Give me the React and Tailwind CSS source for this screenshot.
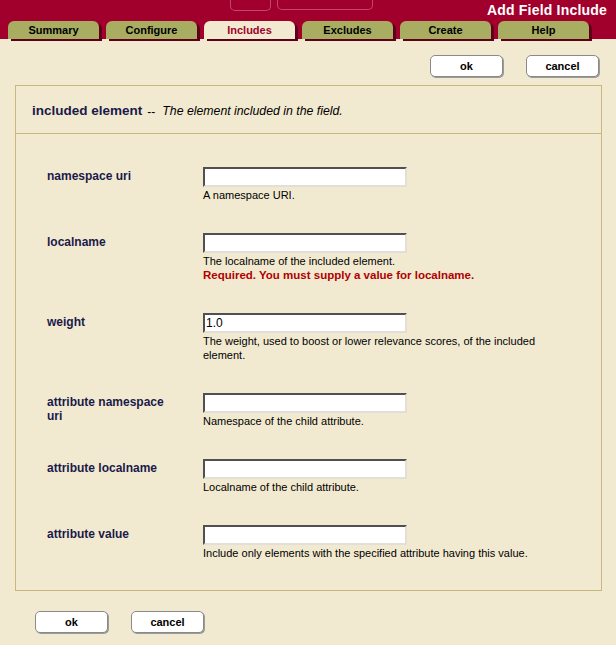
import React from 'react';

const tabs = ['Summary', 'Configure', 'Includes', 'Excludes', 'Create', 'Help'];

const fields = [
    { label: 'namespace uri', help: 'A namespace URI.' },
    { label: 'localname', help: 'The localname of the included element.', required: 'Required. You must supply a value for localname.' },
    { label: 'weight', value: '1.0', help: 'The weight, used to boost or lower relevance scores, of the included element.' },
    { label: 'attribute namespace uri', help: 'Namespace of the child attribute.' },
    { label: 'attribute localname', help: 'Localname of the child attribute.' },
    { label: 'attribute value', help: 'Include only elements with the specified attribute having this value.' },
];

function Tab({ label, active }) {
    return (
        <div
            className={
                active
                    ? 'flex h-[18px] w-[91px] items-center justify-center rounded-t-[6px] bg-[#f2ead0] pt-[1px] text-[11px] font-bold text-[#a0002c] shadow-[3px_2px_0_#5e0019]'
                    : 'flex h-[18px] w-[91px] items-center justify-center rounded-t-[6px] bg-[#a8ad62] pt-[1px] text-[11px] font-bold text-black shadow-[3px_2px_0_#5e0019]'
            }
        >
            {label}
        </div>
    );
}

function Button({ children }) {
    return (
        <button className="h-[22px] w-[73px] rounded-[5px] border border-[#8a8a8a] bg-white text-[11px] font-bold text-black shadow-[1px_1px_0_#9a9a9a]">
            {children}
        </button>
    );
}

function FieldRow({ label, value, help, required }) {
    return (
        <div className="flex pb-[15px] pl-[31px] pt-[16px] leading-[14px]">
            <div className="mr-[31px] w-[125px] shrink-0 pt-[2px] text-[12px] font-bold text-[#1a1a4a]">{label}</div>
            <div className="flex-1 pr-[32px]">
                <input
                    defaultValue={value}
                    className="block h-[20px] w-[204px] border-2 border-t-[#505050] border-l-[#505050] border-r-[#e2dfd6] border-b-[#e2dfd6] bg-white px-[1px] text-[12px] text-black outline-none"
                />
                <div className="mt-[1px] text-[11px] leading-[14px] text-black">{help}</div>
                {required && <div className="text-[11.5px] font-bold leading-[14px] text-[#b00000]">{required}</div>}
            </div>
        </div>
    );
}

export default function App() {
    return (
        <div className="min-h-[645px] bg-[#f2ead0] font-['Liberation_Sans',Arial,sans-serif]">
            <div className="h-[39px] bg-[#a1002d]">
                <div className="flex h-[21px] items-start">
                    <div className="ml-[230px] h-[11px] w-[41px] rounded-b-[5px] border border-t-0 border-[#c4466c]" />
                    <div className="ml-[6px] h-[10px] w-[96px] rounded-b-[5px] border border-t-0 border-[#c4466c]" />
                    <div className="ml-auto pr-[9px] pt-[2px] text-[14px] font-bold leading-[16px] tracking-[0.2px] text-white">
                        Add Field Include
                    </div>
                </div>
                <div className="flex h-[18px] gap-[7px] pl-[8px]">
                    {tabs.map((t) => (
                        <Tab key={t} label={t} active={t === 'Includes'} />
                    ))}
                </div>
            </div>

            <div className="flex justify-end gap-[23px] pb-[8px] pr-[17px] pt-[16px]">
                <Button>ok</Button>
                <Button>cancel</Button>
            </div>

            <div className="ml-[15px] mr-[14px] border border-[#c9b87e]">
                <div className="flex h-[48px] items-center border-b border-[#c9b87e] pl-[16px] pt-[4px] text-[#1a1a4a]">
                    <span className="text-[13.5px] font-bold">included element</span>
                    <span className="ml-[5px] text-[12px] text-black">--</span>
                    <span className="ml-[7px] text-[12.3px] italic text-black">The element included in the field.</span>
                </div>
                <div className="pb-[15px] pt-[17px]">
                    {fields.map((f) => (
                        <FieldRow key={f.label} {...f} />
                    ))}
                </div>
            </div>

            <div className="flex gap-[23px] pl-[35px] pt-[20px]">
                <Button>ok</Button>
                <Button>cancel</Button>
            </div>
        </div>
    );
}
